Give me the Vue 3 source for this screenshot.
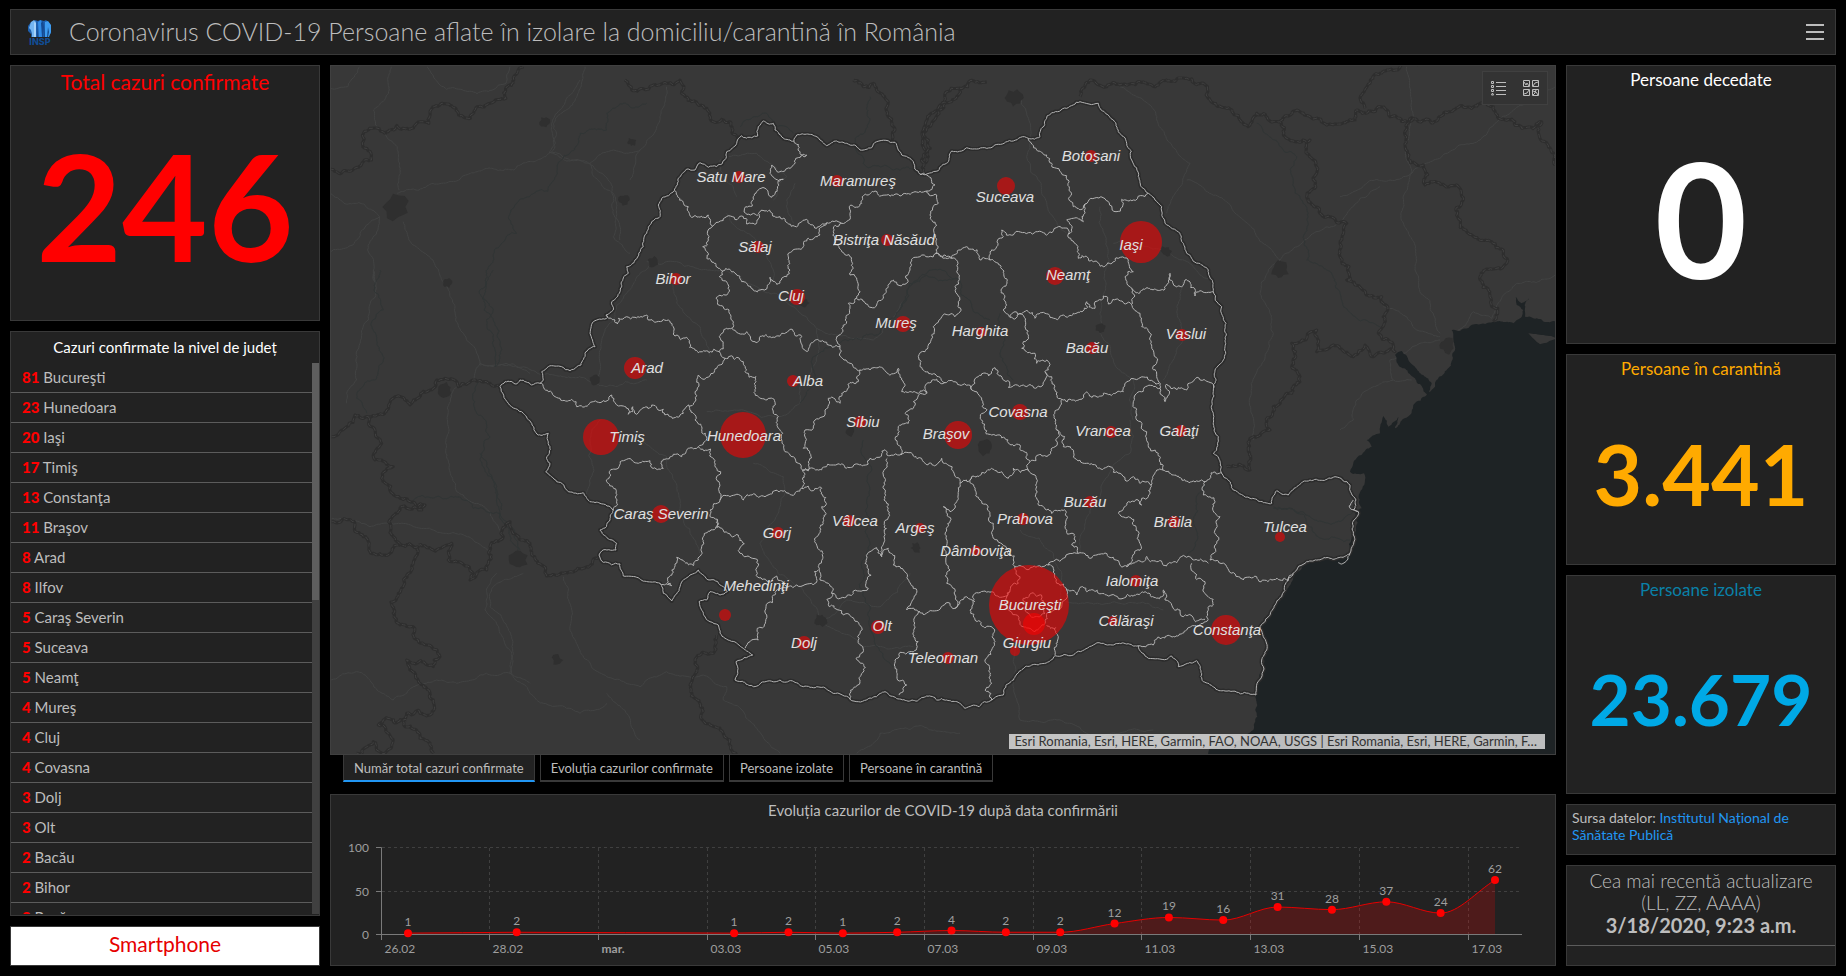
<template>
  <div class="dashboard">
    <header class="topbar">
      <svg class="logo" viewBox="0 0 28 28" role="img" aria-label="INSP">
        <path fill="#1d5fae" d="M2 8l3-4 2 2 2-4 3 1 2-1 4 1 2-1 3 3 2 4v6l-2 2v2H5v-3l-3-3z" />
        <path fill="#74b6f2" d="M5 4l3-2 2 2-1 6 1 9H6L5 12 3 10z" />
        <path fill="#a5d2fa" d="M8 4l2 1v14H8z" />
        <path fill="#2f8be6" d="M12 4l3-2 1 4 1 13h-4z" />
        <path fill="#154a92" d="M15 5l2-2 1 6-1 10h-1z" />
        <path fill="#3d9bf0" d="M19 4l3-1 3 4v7l-2 5h-4z" />
        <path fill="#174a8c" d="M18 8l1 11h-1zM22 9l1 5-1 5h-1zM5 13l1 4-1 2zM12 8v11h-1z" />
        <text x="14" y="27" text-anchor="middle">INSP</text>
      </svg>
      <h1>Coronavirus COVID-19 Persoane aflate în izolare la domiciliu/carantină în România</h1>
      <button type="button" class="menu-button" aria-label="Meniu"><i></i><i></i><i></i></button>
    </header>

    <main class="columns">
      <div class="left-column">
        <section class="panel indicator total">
          <h2>Total cazuri confirmate</h2>
          <strong>246</strong>
        </section>

        <section class="panel county-panel">
          <h2>Cazuri confirmate la nivel de județ</h2>
          <div class="county-body">
            <ul class="county-list">
              <li v-for="row in countyRows" :key="row[1]"><b>{{ row[0] }}</b> {{ row[1] }}</li>
            </ul>
            <div class="scroll-track"><div class="scroll-thumb"></div></div>
          </div>
        </section>

        <a class="phone-link" href="#">Smartphone</a>
      </div>

      <div class="center-column">
        <div class="map-area">
          <section class="map">
            <svg class="map-canvas" viewBox="330 65 1226 690" preserveAspectRatio="xMidYMid slice">
              <path v-for="(d, i) in roads" :key="'r' + i" class="road" :d="d" />
              <path v-for="(d, i) in rivers" :key="'w' + i" class="river" :d="d" />
              <path v-for="(d, i) in towns" :key="'t' + i" class="town" :d="d" />
              <path class="sea" :d="sea" />
              <path class="sea" :d="lagoon" />
              <path class="island" :d="island" />
              <g v-for="(d, i) in frontiers" :key="'f' + i">
                <path class="frontier" :d="d" />
                <path class="frontier-dash" :d="d" />
              </g>
              <path v-for="(d, i) in outline" :key="'o' + i" class="county-shadow" :d="d" />
              <path v-for="(d, i) in counties" :key="'c' + i" class="county" :d="d" />
              <circle v-for="p in places" :key="p[0]" class="case" :cx="p[3]" :cy="p[4]" :r="p[5]" />
              <circle class="case" cx="1034" cy="624" r="11" />
              <text v-for="p in places" :key="p[0]" class="place" :x="p[1]" :y="p[2]">{{ p[0] }}</text>
            </svg>
            <div class="map-tools">
              <button type="button" aria-label="Legendă">
                <svg viewBox="0 0 16 16" width="16" height="16">
                  <path d="M5 2.500h10M5 6.500h10M5 10.500h10M5 14.500h10M.5 1.500h2v2h-2zM.5 5.500h2v2h-2zM.5 9.500h2v2h-2zM.5 15l1-2 1 2z" />
                </svg>
              </button>
              <button type="button" aria-label="Hartă de bază">
                <svg viewBox="0 0 16 16" width="16" height="16">
                  <path d="M.5.5h6v6h-6zM9.500.5h6v6h-6zM.5 9.500h6v6h-6zM9.500 9.500h6v6h-6zM1 2l2 3 1-2 2 3M10 6l2-3 3-1M1 14l3-1 2-3M10 11l3 1 2 3M13 10l-1 3-2 2" />
                </svg>
              </button>
            </div>
            <p class="attribution">Esri Romania, Esri, HERE, Garmin, FAO, NOAA, USGS | Esri Romania, Esri, HERE, Garmin, F…</p>
          </section>
          <nav class="tabs">
            <button v-for="(tab, i) in tabs" :key="tab" type="button" :class="{ active: i === activeTab }" @click="activeTab = i">{{ tab }}</button>
          </nav>
        </div>

        <section class="panel chart-panel">
          <h2>Evoluția cazurilor de COVID-19 după data confirmării</h2>
          <svg class="chart" viewBox="331 830 1224 135">
            <path class="grid" d="M382 847.500H1522M382 891.500H1522" />
            <path v-for="t in ticks.slice(1)" :key="'g' + t.x" class="grid" :d="`M${t.x} 848V934`" />
            <path class="axis" d="M376 847.500h5.500V940M376 891.500h6M376 934.500H1522" />
            <path v-for="t in ticks.slice(1)" :key="'a' + t.x" class="axis" :d="`M${t.x} 935v5`" />
            <text v-for="(v, i) in [100, 50, 0]" :key="v" class="axis-label end" x="369" :y="852 + i * 43.5">{{ v }}</text>
            <text v-for="t in ticks" :key="t.label" class="axis-label" :class="{ month: t.label === 'mar.' }" :x="t.x + 3" y="953">{{ t.label }}</text>
            <path class="area" :d="areaPath" />
            <path class="line" :d="linePath" />
            <g v-for="p in points" :key="p.x">
              <circle :cx="p.x" :cy="p.y" r="4" />
              <text class="axis-label middle" :x="p.x" :y="p.y - 7">{{ p.value }}</text>
            </g>
          </svg>
        </section>
      </div>

      <div class="right-column">
        <section class="panel indicator deaths">
          <h2>Persoane decedate</h2>
          <strong>0</strong>
        </section>
        <section class="panel indicator quarantine">
          <h2>Persoane în carantină</h2>
          <strong>3.441</strong>
        </section>
        <section class="panel indicator isolated">
          <h2>Persoane izolate</h2>
          <strong>23.679</strong>
        </section>
        <section class="panel source">
          Sursa datelor: <a href="#">Institutul Național de Sănătate Publică</a>
        </section>
        <section class="panel updated">
          <p>Cea mai recentă actualizare<br />(LL, ZZ, AAAA)<br /><b>3/18/2020, 9:23 a.m.</b></p>
        </section>
      </div>
    </main>
  </div>
</template>

<script setup>
import { ref } from 'vue'

const tabs = ['Număr total cazuri confirmate', 'Evoluția cazurilor confirmate', 'Persoane izolate', 'Persoane în carantină']
const activeTab = ref(0)

const countyRows = [
  [81, 'Bucureşti'], [23, 'Hunedoara'], [20, 'Iaşi'], [17, 'Timiş'], [13, 'Constanţa'], [11, 'Braşov'],
  [8, 'Arad'], [8, 'Ilfov'], [5, 'Caraş Severin'], [5, 'Suceava'], [5, 'Neamţ'], [4, 'Mureş'], [4, 'Cluj'],
  [4, 'Covasna'], [3, 'Dolj'], [3, 'Olt'], [2, 'Bacău'], [2, 'Bihor'], [2, 'Buzău']
]

// name, label x, label y, circle x, circle y, radius
const places = [
  ['Satu Mare', 731, 182, 739, 177, 6], ['Maramureş', 858, 186, 837, 181, 6], ['Bistriţa Năsăud', 884, 245, 887, 240, 6],
  ['Sălaj', 755, 252, 758, 247, 6], ['Bihor', 673, 284, 676, 279, 6], ['Cluj', 791, 301, 797, 297, 8],
  ['Mureş', 896, 328, 903, 324, 8], ['Arad', 647, 373, 635, 368, 11], ['Alba', 808, 386, 793, 381, 6],
  ['Timiş', 627, 442, 601, 437, 18], ['Hunedoara', 744, 441, 743, 435, 23], ['Sibiu', 863, 427, 860, 422, 6],
  ['Suceava', 1005, 202, 1006, 186, 9], ['Botoşani', 1091, 161, 1091, 156, 6], ['Iaşi', 1131, 250, 1141, 242, 21],
  ['Neamţ', 1068, 280, 1055, 276, 9], ['Harghita', 980, 336, 981, 332, 5], ['Bacău', 1087, 353, 1092, 348, 6],
  ['Vaslui', 1186, 339, 1182, 335, 6], ['Covasna', 1018, 417, 1020, 412, 8], ['Vrancea', 1103, 436, 1111, 432, 6],
  ['Galaţi', 1179, 436, 1181, 431, 6], ['Braşov', 946, 439, 958, 435, 14], ['Caraş Severin', 661, 519, 661, 514, 9],
  ['Gorj', 777, 538, 778, 533, 6], ['Vâlcea', 855, 526, 849, 521, 6], ['Argeş', 915, 533, 920, 528, 5],
  ['Mehedinţi', 756, 591, 725, 615, 6], ['Dolj', 804, 648, 804, 643, 7], ['Olt', 882, 631, 878, 627, 7],
  ['Teleorman', 943, 663, 948, 658, 6], ['Prahova', 1025, 524, 1023, 519, 6], ['Dâmboviţa', 976, 556, 976, 551, 5],
  ['Buzău', 1085, 507, 1090, 502, 6], ['Brăila', 1173, 527, 1174, 522, 6], ['Tulcea', 1285, 532, 1280, 537, 5],
  ['Ialomiţa', 1132, 586, 1136, 581, 6], ['Bucureşti', 1030, 610, 1029, 605, 40], ['Giurgiu', 1027, 648, 1015, 651, 5],
  ['Călăraşi', 1126, 626, 1113, 621, 5], ['Constanţa', 1227, 635, 1226, 630, 15]
]

// Map sheets: origin x, origin y, units per pixel across and down
const sheets = {
  A: [480, 80, 3, 3],
  B: [900, 80, 3, 3],
  C: [480, 420, 3, 3],
  D: [920, 420, 3, 3],
  E: [330, 270, 3, 3],
  F: [0, 0, 2.53, 3],
  G: [1340, 50, 3, 3]
}

function project(text) {
  let sheet = sheets.A
  const out = []
  for (const token of text.trim().split(/\s+/)) {
    if (sheets[token]) {
      sheet = sheets[token]
      continue
    }
    const [x, y] = token.split(',').map(Number)
    out.push([sheet[0] + x / sheet[2], sheet[1] + y / sheet[3]])
  }
  return out
}

let seed = 7
function random() {
  seed = (seed * 16807) % 2147483647
  return seed / 2147483647 - 0.5
}

function split(a, b, amount, out) {
  const dx = b[0] - a[0]
  const dy = b[1] - a[1]
  if (Math.hypot(dx, dy) < 2.5) {
    out.push(b)
    return
  }
  const k = random() * amount
  const mid = [(a[0] + b[0]) / 2 - dy * k, (a[1] + b[1]) / 2 + dx * k]
  split(a, mid, amount, out)
  split(mid, b, amount, out)
}

function rough(text, amount) {
  const list = project(text)
  const out = [list[0]]
  for (let i = 1; i < list.length; i++) split(list[i - 1], list[i], amount, out)
  return 'M' + out.map((p) => p[0].toFixed(1) + ' ' + p[1].toFixed(1)).join('L')
}

const outline = [
  'A 1320,283 1300,245 1265,225 1245,187 1190,185 1175,203 1140,210 1100,190 1070,183 1040,197 1015,173 950,165 942,183 885,150 880,130 850,123 835,140 833,168 815,173 785,167 770,190 740,215 738,235 710,260 685,262 660,248 645,270 620,267 595,295 583,332 545,355 535,375 540,410 515,425 500,460 490,500 465,540 440,560 445,580 425,605 420,635 395,665 400,690 378,705 383,712 345,722 330,760 345,800 315,820 303,855 290,860 270,872 245,860 205,860 185,875 190,900 180,910 155,915 120,900 110,912 75,905 60,920 85,970 130,1000 155,1030 C 175,45 205,40 210,80 200,110 210,130 197,155 230,185 265,215 310,218 330,245 360,250 400,270 390,300 360,330 410,370 408,390 365,393 357,405 370,427 420,432 430,468 470,472 540,490 550,520 575,543 600,500 630,465 655,450 690,480 730,500 742,515 720,525 690,515 680,540 657,545 670,580 690,605 715,615 720,640 790,685 818,705 768,725 765,780 820,800 900,780 970,800 1010,800 1110,838 1160,840 1215,815 1280,842 1340,828 1370,840 1400,840 D 135,865 215,840 250,825 335,735 405,707 460,705 550,670 620,672 655,677 685,715 740,718 755,708 775,740 830,722 850,785 915,813 1008,825',
  'A 1320,283 B 115,272 155,213 200,203 295,193 340,183 385,175 420,170 422,150 455,98 500,85 540,65 595,70 640,120 655,155 680,190 695,240 715,290 745,340 785,380 795,430 840,460 860,520 925,570 940,635 965,680 978,730 975,800 945,870 940,930 940,1000 D 895,50 880,100 905,160 925,180 940,210 990,235 1055,250 1070,212 1105,225 1130,200 1170,180 1245,170 1290,195 1308,240 1300,270 1315,275 1300,345 1290,400 1230,415 1160,425 1120,460 1085,530 1045,590 1020,625 1030,650 1040,690 1025,720 1008,825'
].map((t) => rough(t, 0.3))

const counties = [
  'A 942,183 980,225 930,265 875,255 870,280 910,298 875,352 843,325 820,350 817,378 797,380 797,400 835,405',
  'A 583,332 625,380 628,400 685,405 698,438 745,407 785,408 800,432 830,428 835,400 855,393 900,410 960,428 980,418 1010,445 1040,428 1085,430 1110,400 1112,375 1145,370 1185,333 1220,345 1260,348 1300,337 1340,333',
  'A 1320,283 1340,285 1365,315 1340,333 1370,345 1375,370 1350,405 1370,435 1368,520 1395,525 1415,535',
  'A 698,438 682,460 685,480 668,500 685,520 680,535 728,573 765,580 785,605 840,630 862,620 870,592 890,613 920,590 930,570 935,515 970,500 985,475 1020,465 1040,428',
  'A 1085,430 1060,455 1060,495 1085,515 1115,545 1110,585 1135,615 1130,655 1190,675 1210,650 1240,600 1280,610 1290,570 1320,530 1368,520',
  'A 1130,655 1105,670 1110,685 1098,710 1085,745 1070,770 1080,800 1078,825 1110,850 1140,870 1170,870 1220,878 1255,865 1265,900 1265,935 1330,930 1340,940',
  'A 728,573 718,590 745,615 735,645 708,655 730,680 755,745 800,755 825,785 870,770 905,760 965,770 985,812 990,795 1040,787 1080,800',
  'A 378,705 405,720 412,732 415,715 465,712 500,705 510,720 550,718 580,740 585,768 620,772 655,818 718,815',
  'A 755,745 740,745 718,770 718,815 735,835 710,865 700,880 655,885 645,935 648,960 625,975 640,1000 645,1020 665,1040 C 680,50 655,80',
  'A 180,910 205,935 240,955 275,958 290,980 325,975 360,968 395,945 405,968 430,978 445,1003 458,980 470,1003 515,975 550,988 600,1005 625,975',
  'A 735,835 790,845 795,875 828,890 825,920 835,950 870,955 880,1000 895,1010 895,1045 C 905,60 915,95 940,110 968,150 965,205',
  'A 1140,870 1135,905 1085,940 1080,970 1045,955 1035,990 1005,1020 1000,1045 C 975,30 970,85 985,150 968,150',
  'A 1340,940 1300,965 1300,985 1275,1000 1285,1030 1255,1045 C 1255,45 1265,105',
  'A 1340,940 1335,925 1395,907',
  'B 108,520 155,535 170,575 165,620 175,665 165,710 95,765 90,790 75,815 55,830 60,860 75,875 135,908 165,905 205,915 215,930 235,890 285,863 325,922 370,915 435,900 435,875',
  'B 155,535 175,510 200,500 240,540 270,540 295,550 322,600 303,630 310,690 330,712 360,700 375,740 385,770 365,805 405,820 410,850 440,840 435,875 455,890 465,930 485,958 520,960 560,935 610,940 670,935 680,905 720,893 760,905 778,910',
  'B 385,175 410,210 440,225 470,265 505,300 520,380 550,385 555,372 635,378 648,395 665,358 700,360 745,340',
  'B 555,372 550,425 520,415 500,420 515,455 505,462 475,440 430,458 385,458 340,465 305,450 310,470 290,500 270,540',
  'B 505,462 530,495 535,535 580,545 610,560 640,545 685,540 700,575 675,590 695,625 697,672',
  'B 330,712 345,695 380,690 405,715 435,700 450,712 490,705 520,700 560,665 585,685 610,648 625,672 690,668 720,700 725,740 755,800 770,890 780,925 795,965 803,930 800,912 860,930 875,907 940,925',
  'B 695,625 745,625 800,615 810,580 845,620 855,600 885,648 900,632 940,635',
  'B 215,930 245,960 245,1020 D 215,45 240,45 300,75 330,125 325,150 345,165 350,200 370,260 425,270 435,320 465,350 455,375 475,400 510,415 580,412 620,440 650,425 710,425 770,428 800,412 865,430',
  'B 485,958 470,990 468,1020 D 410,30 405,80 385,105 355,105 330,125',
  'B 780,925 710,940 700,965 710,1020 D 680,35 685,70 715,100 728,150 760,165 815,185 855,185 905,160',
  'C 400,270 408,235 380,185 388,155 415,145 440,118 475,130 510,122 515,143 550,145 550,118 580,103 605,110 625,85 655,80 705,122 722,155 720,240 690,270 690,290 712,298',
  'C 540,490 575,497 575,450 590,412 640,437 665,380 670,350 712,298 775,345 780,400 830,455 890,468 925,500',
  'C 720,240 790,240 855,230 905,212 935,225 965,205 1000,212 1025,205 1025,260 1038,280 1018,340 1015,440 1020,480',
  'C 1015,450 1003,455 1000,495 950,495 925,500 880,525 858,560 860,585 832,625 835,660 810,665 795,685',
  'C 1020,480 1045,490 1055,520 1100,530 1120,513 1165,505 1155,430 1170,395 1190,383 1205,410 1225,385 1240,435 1270,450 1280,570 1320,575 1305,590 1300,650 1310,685 1245,720 1245,740 1280,795 1257,825',
  'C 1055,520 1048,560 1090,585 1140,640 1128,715 1148,730 1140,780 1120,805 1110,838',
  'C 1222,115 1210,165 1212,240 1218,300 1212,350 1205,410',
  'C 968,150 1000,145 1060,135 1115,142 1170,115 1260,105 1300,108 D 65,115 100,155 120,190 145,185 155,170 185,158 245,155 265,175 280,145 325,150',
  'C 1320,578 1370,572 1410,550 D 105,565 105,525 80,490 90,450 78,400 80,330 70,260 90,275 110,245 120,190',
  'D 155,170 165,210 180,240 220,310 220,355 260,385 285,440 300,437 385,435 430,415 475,400',
  'D 410,30 430,80 500,130 570,140 600,160 615,180 640,170 660,190 693,195 728,150',
  'D 693,195 685,230 665,235 665,255 625,245 597,275 625,290 655,345 635,415 620,440',
  'D 855,185 850,225 885,245 885,280 900,290 885,330 885,375 870,420 920,440 955,470 970,480 1010,470 1080,480 1120,460',
  'D 815,430 820,455 855,485 865,530 880,555 850,610 800,630 740,648 700,675 655,677',
  'D 385,435 400,445 410,490 440,510 470,525 488,500 500,515 560,525 610,535 725,530 730,510 735,540 780,570 790,590 805,585 855,598',
  'D 285,440 300,470 295,490 270,515 265,570 300,605 345,635 375,610 380,580 425,560 440,510',
  'D 310,535 340,518 370,550 375,580 345,590 315,570 310,535',
  'D 270,515 205,515 165,520 150,570 165,600 215,620 220,680 195,720 215,840',
  'D 105,565 140,530 165,545',
  'D 380,615 415,650 405,705',
  'D 1315,275 1290,265 1300,240',
  'D 1290,400 1280,422 1255,428'
].map((t) => rough(t, 0.6)).concat(outline)

const frontiers = [
  'F 835,507 895,507 940,480 918,440 918,410 935,385 1030,385 1085,370 1090,330 1120,310 1160,345 1190,355 1240,310 1280,295 1300,240 1325,200',
  'E 5,500 50,470 75,435 115,440 170,420 190,385 240,405 300,360 320,330 345,325 385,350 430,330 470,335 510,350',
  'E 115,440 135,480 155,520 135,570 190,590 155,625 200,680 240,695 285,705 275,720 210,715 185,745 190,800 210,825 265,830 245,890 205,970 190,1030 210,1065 250,1070 265,1110 330,1160 310,1190 230,1170 270,1240 310,1290 300,1335 230,1330 225,1370 270,1405 310,1450',
  'E 230,1350 160,1350 145,1365 185,1430 165,1450 130,1415 80,1450',
  'E 5,755 75,765 100,800 120,845 180,850 210,825',
  'E 265,825 365,820 355,870 430,910 420,930 470,900 480,830 520,800 540,755 600,820 C 155,405 200,468 250,460 310,445 357,410',
  'A 435,0 455,30 520,15 560,10 600,0 635,65 680,85 700,125 750,125 780,180',
  'A 1120,0 1150,20 1180,10 1220,60 1225,110 1245,150 1235,185',
  'A 1440,25 1380,90 1330,150 1330,200 1345,230 1330,275',
  'B 70,250 70,160 120,75 180,25 260,5',
  'B 540,50 570,0 620,20 660,15 720,5 860,-5 930,60 1000,100 1045,140 1070,100 1140,125 1150,165 1230,180 1250,280 1220,350 1260,400 1340,430 1320,530 1350,600 G 20,690 125,740 130,800 115,850 165,905 100,920 75,885 40,920 0,895 B 1300,795 1250,815 1250,750 1175,790 1175,860 1200,890 1175,940 1120,980 1110,1050 D 1000,50 985,90 990,150 920,140',
  'B 1140,125 1200,95 1280,135 1360,120 G 45,210 50,180 120,170 150,200 220,205 330,185 460,170 475,205 545,235 605,215 615,275 645,345',
  'G 220,205 200,260 225,340 250,345 255,405 350,405 370,450 385,550 455,575 490,600 490,650 420,680 450,740 460,815',
  'G 75,175 90,100 140,60 235,45',
  'C 710,645 700,700 645,720 630,795 660,850 675,910 750,960 770,1005'
].map((t) => rough(t, 0.5))

const roads = [
  'F 835,265 880,260 910,200', 'F 990,200 985,270 945,330 950,375 1005,440 1010,570',
  'F 1080,200 1130,268 1280,250 1290,200',
  'F 1480,200 1465,270 1400,370 1405,430 1390,460 1300,510 1190,520 1060,570 1005,580',
  'F 1395,460 1490,490 1550,560 1568,720', 'F 1020,665 1110,810 E 375,110 400,190 450,280 600,310',
  'F 960,650 930,750 950,850 E 130,0 115,150 90,220 80,330 50,370 50,400', 'F 835,580 870,610 920,612 960,650 835,755',
  'A 210,218 225,200 215,130 300,0', 'A 210,218 330,250 400,340 410,400 400,470 450,520',
  'A 330,250 400,210 480,210 450,300', 'A 560,20 530,140 480,210',
  'A 500,545 590,545 690,570 830,620 940,680 1010,745 1070,765 1180,780 1268,665', 'A 520,550 440,640 400,720 350,900',
  'A 580,600 590,670 660,740 690,830', 'A 0,855 250,890 500,900', 'A 740,400 780,450 850,500 880,600',
  'A 880,360 920,290 830,220 720,240 770,350', 'A 940,430 920,360 945,310', 'A 1010,745 960,970 900,1010 680,995',
  'C 130,460 30,520 30,560 100,700 90,760 190,850 300,880 380,850', 'C 250,470 270,620 380,770 480,800 560,755 670,765 740,800 730,840 900,1000',
  'C 380,820 480,960', 'C 1130,1000 1200,940 1440,940', 'C 360,0 330,60 320,240', 'C 480,60 560,110 600,250 660,400',
  'C 820,130 910,170 900,260 840,370 930,480 1020,600 1100,540 1200,560 1290,460', 'C 1020,600 1150,680 1300,680',
  'B 660,20 770,120 870,250 800,400', 'B 860,300 1030,420 1140,540 1300,440 1440,320',
  'B 1140,540 1080,640 1120,760 1080,860 1060,1080', 'B 600,380 620,560 600,700 600,760 700,900 700,1020',
  'B 640,490 800,510 940,600', 'B 360,50 380,230 450,400 500,460', 'B 850,600 850,760 790,900',
  'D 630,0 630,100 510,280 480,400', 'D 300,330 400,400 420,540 600,550 730,570', 'D 300,640 280,800 300,900 500,940 700,930',
  'G 200,50 220,200 215,360 225,660 300,850', 'G 0,440 150,390 250,345 420,270 480,205 645,110',
  'G 130,770 230,840 300,860', 'G 160,990 150,930 240,880 300,870', 'G 355,840 400,785 455,805 530,700 645,675',
  'G 215,990 160,990 50,1050 40,1110 0,1140',
  'E 450,280 430,330 370,360 355,470 365,620 380,665 455,705 520,800',
  'E 5,745 70,750 120,770 280,775 350,790 480,845', 'E 500,910 465,1020 510,1090 545,1150 545,1210',
  'E 0,1230 80,1205 190,1290 250,1250 320,1230 380,1240 470,1210 545,1210 600,1240'
].map((t) => rough(t, 0.25))

const rivers = [
  'E 150,0 160,120 125,155 140,210 135,330 80,385 110,430', 'E 490,0 450,60 490,120 475,180 495,290',
  'E 455,330 480,500 455,550 500,650 515,720', 'E 240,700 400,690 430,715 510,730 560,850',
  'A 500,70 380,100 380,150 300,160 270,220 90,400 110,460 40,530 10,650 40,720 45,860', 'A 780,140 860,100 940,160',
  'A 1170,50 1130,170 1150,250 1240,270 1320,260', 'A 1440,600 1340,580 1280,660 1200,760 1080,790 1000,830 960,970',
  'B 0,690 30,610 80,585 180,600 215,680 270,720', 'B 1070,130 1190,230 1180,310 1220,420 1220,540 1280,570 1320,640 1440,740',
  'B 300,700 300,830 340,900', 'D 855,190 820,300 825,380 800,410', 'D 1060,260 1160,310 1290,360', 'D 1060,265 1300,275',
  'C 1150,60 1160,250 1150,420 1170,560 1240,740', 'C 0,100 40,180 60,280 120,390'
].map((t) => rough(t, 0.4))

const townSpots = [
  [545, 122, 5], [632, 142, 4], [624, 200, 5], [653, 262, 5], [804, 303, 5], [448, 283, 5], [595, 380, 5], [518, 560, 9],
  [557, 660, 5], [821, 620, 6], [985, 448, 8], [1015, 98, 9], [1280, 270, 8], [1447, 345, 8], [445, 390, 7], [916, 548, 5],
  [1101, 328, 5], [1166, 251, 5], [850, 431, 5], [396, 207, 12]
]
const towns = townSpots.map(([x, y, r]) => {
  const ring = []
  for (let i = 0; i < 14; i++) {
    const k = r * (0.95 + random() * 0.6)
    ring.push((x + Math.cos(i / 2.228) * k).toFixed(1) + ' ' + (y + Math.sin(i / 2.228) * k).toFixed(1))
  }
  return 'M' + ring.join('L') + 'Z'
})

const sea = rough('D 860,1010 870,985 960,960 1000,930 1012,890 1005,825 1020,760 1030,700 1035,650 1022,625 1050,580 1090,530 1120,465 1160,425 1230,415 1290,403 1300,345 1308,270 1325,265 1332,160 G 30,1265 40,1240 95,1190 80,1170 120,1150 130,1098 145,1130 175,1100 165,1135 215,1085 220,1065 260,1035 285,1010 345,900 340,860 335,840 360,843 410,822 460,815 520,820 545,800 550,780 530,765 527,740 545,760 570,740 555,775 555,800 580,805 660,812', 0.3) + 'L1560 760L1206 760Z'
const lagoon = rough('G 165,915 185,903 205,930 225,950 250,975 275,1000 262,1035 225,985 175,945 165,915', 0.3) + 'Z'
const island = rough('G 565,850 655,865 620,878 600,883 565,850', 0.1) + 'Z'

const dayWidth = 54.35
const series = [[0, 1], [2, 2], [6, 1], [7, 2], [8, 1], [9, 2], [10, 4], [11, 2], [12, 2], [13, 12], [14, 19], [15, 16], [16, 31], [17, 28], [18, 37], [19, 24], [20, 62]]
const points = series.map(([day, value]) => ({ x: 408 + day * dayWidth, y: 934 - value * 0.87, value }))
const ticks = ['26.02', '28.02', 'mar.', '03.03', '05.03', '07.03', '09.03', '11.03', '13.03', '15.03', '17.03']
  .map((label, i) => ({ label, x: Math.floor(381 + i * dayWidth * 2) + 0.5 }))

function slope(i) {
  const before = points[i - 1]
  const here = points[i]
  const after = points[i + 1]
  if (!before) return 0
  if (!after) return (here.y - before.y) / (here.x - before.x)
  const a = (here.y - before.y) / (here.x - before.x)
  const b = (after.y - here.y) / (after.x - here.x)
  return a * b <= 0 ? 0 : (2 * a * b) / (a + b)
}

let linePath = `M${points[0].x} ${points[0].y}`
for (let i = 1; i < points.length; i++) {
  const p = points[i - 1]
  const q = points[i]
  const step = (q.x - p.x) / 3
  linePath += `C${p.x + step} ${p.y + slope(i - 1) * step} ${q.x - step} ${q.y - slope(i) * step} ${q.x} ${q.y}`
}
const areaPath = `${linePath}V934H${points[0].x}Z`
</script>

<style>
body { background: #000000; }
</style>

<style scoped>
.dashboard {
  height: 100vh;
  min-height: 700px;
  box-sizing: border-box;
  display: flex;
  flex-direction: column;
  gap: 10px;
  padding: 9px 10px 10px;
  color: #bdbdbd;
  background: #000000;
  font-family: Lato, "Open Sans", sans-serif;
}

.dashboard * { box-sizing: border-box; }
h1, h2, p, ul { margin: 0; padding: 0; font-weight: 400; }
button { font-family: inherit; cursor: pointer; }
.panel { min-height: 0; min-width: 0; border: 1px solid #393939; background: #222222; }

.topbar { flex: none; height: 46px; display: flex; align-items: center; padding: 0 10px 0 15px; border: 1px solid #393939; background: #222222; }
.topbar h1 { flex: 1; margin-left: 15px; padding-bottom: 2px; font-size: 25px; font-weight: 300; line-height: 30px; white-space: nowrap; }
.logo { width: 28px; height: 28px; }
.logo text { fill: #114c93; font: 800 9px Inter, sans-serif; }
.menu-button { width: 20px; height: 18px; display: flex; flex-direction: column; justify-content: space-between; padding: 1px; border: 0; background: transparent; }
.menu-button i { height: 2px; background: #bdbdbd; }

.columns { flex: 1; min-height: 0; display: grid; grid-template-columns: 310fr 1226fr 270fr; gap: 10px; }
.left-column { min-width: 0; min-height: 0; display: grid; grid-template-rows: 256fr 585fr 40px; gap: 10px; }
.right-column { min-width: 0; min-height: 0; display: grid; grid-template-rows: 279fr 211fr 219fr 51px 101px; gap: 10px; }
.center-column { min-width: 0; min-height: 0; display: grid; grid-template-rows: 717fr 172px; gap: 12px; }

.indicator { display: flex; flex-direction: column; text-align: center; }
.indicator h2 { padding-top: 4px; font-size: 17px; line-height: 20px; }
.indicator strong { flex: 1; display: flex; align-items: center; justify-content: center; padding-top: 4px; line-height: 1; }
.total { color: #ff0000; }
.total h2 { font-size: 21px; line-height: 24px; }
.total strong { padding: 0 0 4px; font-size: 148px; }
.deaths { color: #ffffff; }
.deaths strong { padding-top: 0; font-size: 160px; }
.quarantine { color: #ffaa00; }
.quarantine strong { font-size: 84px; }
.isolated { color: #00a9e6; }
.isolated h2 { color: #0a81a8; }
.isolated strong { font-size: 71px; }

.county-panel { display: flex; flex-direction: column; }
.county-panel h2 { padding: 5px 0 6px; color: #ffffff; font-size: 15px; line-height: 20px; text-align: center; }
.county-body { flex: 1; min-height: 0; display: flex; padding-bottom: 1px; }
.county-list { flex: 1; overflow-y: auto; scrollbar-width: none; list-style: none; }
.county-list li { height: 30px; padding-left: 11px; border-bottom: 1px solid #5c5c5c; font-size: 15px; line-height: 28px; }
.county-list b { color: #ff0000; font-weight: 900; }
.scroll-track { width: 7px; background: #404040; }
.scroll-thumb { height: 43%; background: #5e5e5e; }
.phone-link { display: block; border: 1px solid #393939; color: #e60000; background: #ffffff; font-size: 21px; line-height: 34px; text-align: center; text-decoration: none; }

.map-area { min-height: 0; display: flex; flex-direction: column; }
.map { position: relative; flex: 1; min-height: 0; overflow: hidden; background: #383838; }
.map::after { content: ""; position: absolute; inset: 0; border: 1px solid #404040; pointer-events: none; }
.map-canvas { display: block; width: 100%; height: 100%; }
.map-canvas path { fill: none; stroke-linejoin: round; }
.map-canvas .road { stroke: #424343; }
.map-canvas .river { stroke: #303535; }
.map-canvas .town { fill: #2f2f2f; }
.map-canvas .sea { fill: #1e2325; }
.map-canvas .island { fill: #383838; }
.map-canvas .frontier { stroke: #2e2e2e; stroke-width: 3; }
.map-canvas .frontier-dash { stroke: #414141; stroke-dasharray: 4 3; }
.map-canvas .county-shadow { stroke: #2b2b2b; stroke-width: 4; }
.map-canvas .county { stroke: #b4b4b4; }
.case { fill: #ff0000; fill-opacity: 0.56; }
.place { fill: #e0e0e0; font: italic 15px "Liberation Sans", Arial, sans-serif; text-anchor: middle; }
.map-tools { position: absolute; top: 6px; right: 8px; display: flex; border: 1px solid #404040; background: #333333; }
.map-tools button { width: 32px; height: 32px; display: grid; place-items: center; padding: 0; border: 0; background: transparent; }
.map-tools path { fill: none; stroke: #bdbdbd; }
.attribution { position: absolute; right: 11px; bottom: 6px; padding: 0 8px 0 5px; color: #323232; background: rgba(255, 255, 255, 0.7); font-size: 13px; line-height: 15px; white-space: nowrap; }

.tabs { flex: none; display: flex; gap: 5px; padding-left: 13px; }
.tabs button { height: 27px; padding: 0 10px; border: 1px solid #393939; border-top: 0; border-bottom: 2px solid #393939; color: #bdbdbd; background: #000000; font-size: 13px; }
.tabs button.active { border-bottom-color: #2196f3; background: #222222; }

.chart-panel { display: flex; flex-direction: column; }
.chart-panel h2 { padding: 5px 0 10px; font-size: 15px; line-height: 20px; text-align: center; }
.chart { display: block; flex: 1; min-height: 0; width: 100%; }
.chart path { fill: none; }
.chart .grid { stroke: #404040; stroke-dasharray: 3 3; }
.chart .axis { stroke: #7a7a7a; }
.chart .area { fill: rgba(255, 0, 0, 0.2); }
.chart .line { stroke: #e60000; }
.chart circle { fill: #ff0000; }
.axis-label { fill: #9e9e9e; font-size: 12px; }
.axis-label.end { text-anchor: end; }
.axis-label.middle { text-anchor: middle; }
.axis-label.month { font-weight: 700; }

.source { padding: 4px 5px; font-size: 14px; line-height: 17px; }
.source a { color: #2196f3; text-decoration: none; }
.updated { padding-top: 4px; font-size: 19px; font-weight: 300; line-height: 22px; text-align: center; }
.updated p { padding: 0 8px 8px; border-bottom: 1px solid #5c5c5c; font-weight: inherit; }
.updated b { font-size: 20px; font-weight: 700; }
</style>
